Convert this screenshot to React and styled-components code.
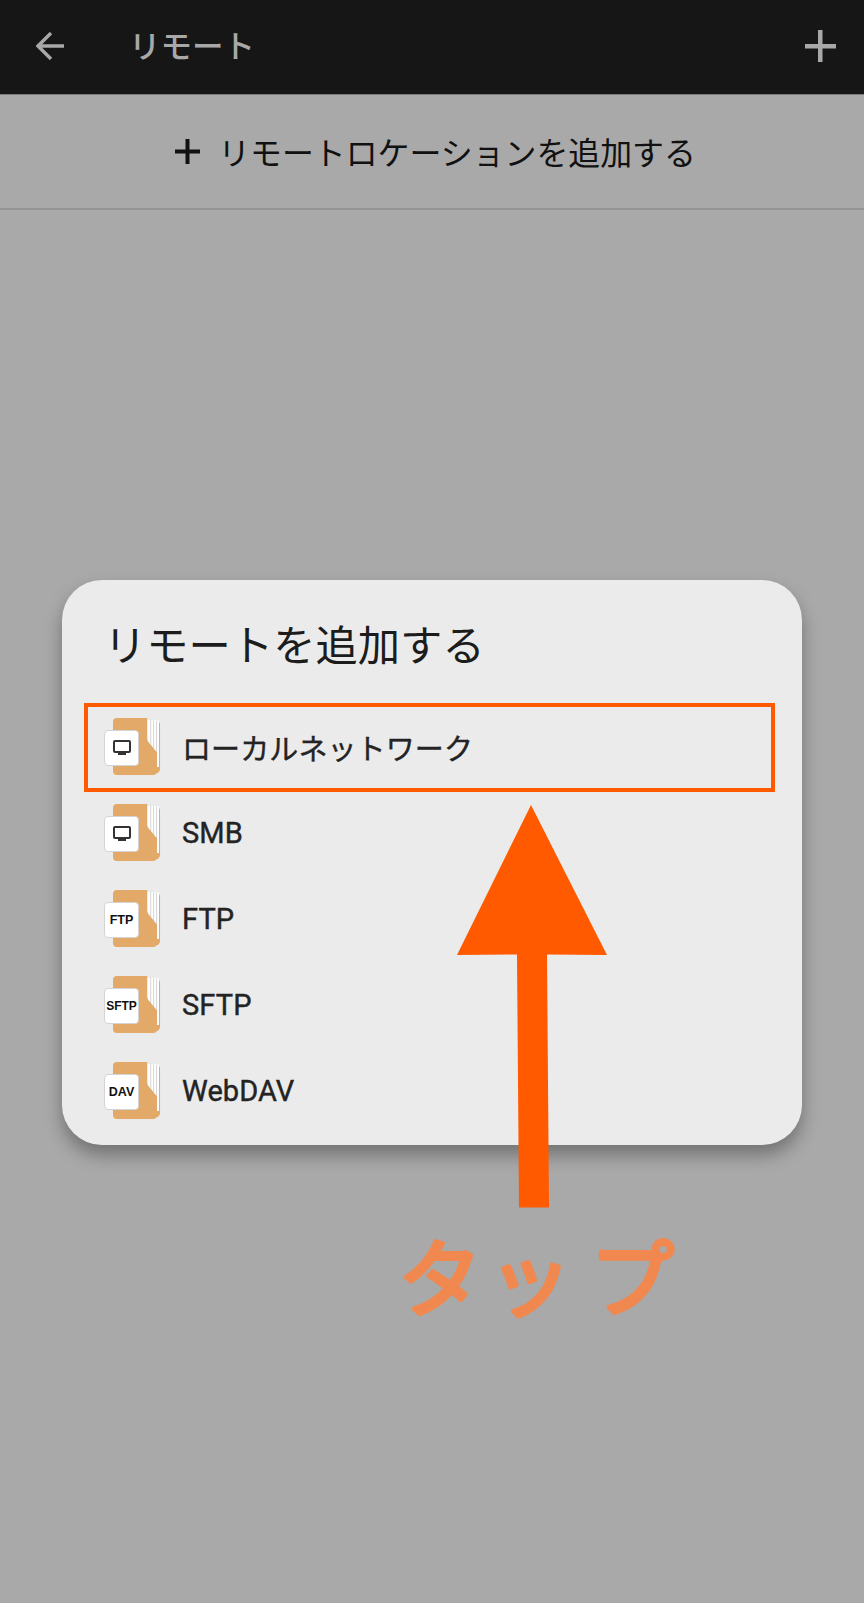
import React from "react";
import styled, { createGlobalStyle } from "styled-components";

const Global = createGlobalStyle`
  html, body { margin: 0; padding: 0; background: #a9a9a9; }
  * { box-sizing: border-box; }
`;

const JP = `"Roboto", "Noto Sans CJK JP", sans-serif`;

const Page = styled.div`
  position: relative;
  width: 864px;
  height: 1603px;
  overflow: hidden;
  background: #a9a9a9;
  font-family: ${JP};
`;
const Header = styled.header`
  height: 95px;
  background: #161616;
  border-bottom: 1px solid #7d7d7d;
  display: flex;
  align-items: center;
  color: #a8a8a8;
  padding: 0 28px 2px 36px;
`;
const BackIcon = styled.svg`
  width: 28px;
  height: 28px;
  flex: none;
`;
const Title = styled.h1`
  margin: 3px 0 0 65px;
  flex: 1;
  font-size: 31.5px;
  font-weight: 500;
  line-height: 40px;
`;
const AddBar = styled.div`
  height: 115px;
  border-bottom: 2px solid #939393;
  display: flex;
  align-items: center;
  justify-content: center;
  gap: 18px;
  color: #111;
  font-size: 31.9px;
  padding: 0 0 1px 7px;
`;
const Dialog = styled.section`
  width: 740px;
  height: 565px;
  margin: 370px 0 0 62px;
  background: #ebebeb;
  border-radius: 40px;
  box-shadow: 0 10px 18px rgba(0, 0, 0, 0.32);
  padding-top: 37px;
`;
const DialogTitle = styled.h2`
  margin: 0 0 0 42px;
  font-size: 42.3px;
  line-height: 60px;
  font-weight: 400;
  color: #1c1c1c;
`;
const List = styled.ul`
  list-style: none;
  margin: 26px 0 0;
  padding: 0;
`;
const Row = styled.li`
  position: relative;
  height: 86px;
  display: flex;
  align-items: center;
  padding-left: 42px;
  gap: 21px;
  font-size: 29px;
  color: #232323;
`;
const Label = styled.span`
  padding-top: 2px;
  -webkit-text-stroke: 0.4px #232323;
  letter-spacing: 0.1px;
`;
const Highlight = styled.div`
  position: absolute;
  left: 22px;
  top: 0;
  width: 691px;
  height: 89px;
  border: 4.4px solid #ff5a00;
`;
const Icon = styled.div`
  position: relative;
  width: 57px;
  height: 58px;
  flex: none;
`;
const Folder = styled.svg`
  position: absolute;
  left: 9px;
  top: 1px;
  width: 48px;
  height: 57px;
`;
const Badge = styled.div`
  position: absolute;
  left: 0;
  top: 13px;
  width: 35px;
  height: 36px;
  background: #fff;
  border: 1px solid #d4d4d4;
  border-radius: 4px;
  display: flex;
  align-items: center;
  justify-content: center;
  font-family: "Liberation Sans", sans-serif;
  font-weight: 700;
  font-size: ${(p) => (p.$small ? "12px" : "12.5px")};
  color: #111;
`;
const Annotation = styled.svg`
  position: absolute;
  left: 0;
  top: 0;
  width: 864px;
  height: 1603px;
  pointer-events: none;
`;
const TapText = styled.text`
  font-family: "Noto Sans CJK JP", sans-serif;
  font-size: 84px;
  fill: #f0884f;
  stroke: #f0884f;
  stroke-width: 4px;
  stroke-linejoin: round;
  stroke-linecap: round;
`;

const FolderArt = () => (
  <Folder viewBox="0 0 49 58">
    <path d="M38 4h8a2 2 0 0 1 2 2v47l-2 3h-8z" fill="#e2a968" />
    <path d="M34 2h11a2 2 0 0 1 2 2v46H34z" fill="#fff" />
    <path d="M38.5 1.5V28M41.5 2v30M44.5 2.5V36" stroke="#c9c9c9" strokeWidth="0.8" fill="none" />
    <path
      d="M4 0h31v21q0 2 1.5 4L45 35v19a4 4 0 0 1-4 4H4a4 4 0 0 1-4-4V4a4 4 0 0 1 4-4z"
      fill="#e2a968"
    />
  </Folder>
);

const Monitor = () => (
  <svg width="18" height="16" viewBox="0 0 18 16">
    <rect x="1" y="1" width="16" height="11" rx="1" fill="none" stroke="#333" strokeWidth="2" />
    <rect x="5" y="13" width="8" height="2" fill="#333" />
  </svg>
);

const rows = [
  { label: "ローカルネットワーク", badge: <Monitor />, active: true },
  { label: "SMB", badge: <Monitor /> },
  { label: "FTP", badge: "FTP" },
  { label: "SFTP", badge: "SFTP", small: true },
  { label: "WebDAV", badge: "DAV" },
];

export default function App() {
  return (
    <Page>
      <Global />
      <Header>
        <BackIcon viewBox="0 0 28 28" fill="none" stroke="#a8a8a8" strokeWidth="3.4">
          <path d="M28 14H3M15 1 2 14l13 13" />
        </BackIcon>
        <Title>リモート</Title>
        <svg width="32" height="32" viewBox="0 0 32 32" fill="#a8a8a8">
          <rect x="14" width="4.5" height="32" />
          <rect x="1" y="14" width="31" height="4.5" />
        </svg>
      </Header>
      <AddBar>
        <svg width="25" height="25" viewBox="0 0 25 25" fill="#111">
          <rect x="10.5" width="4" height="25" />
          <rect y="10.5" width="25" height="4" />
        </svg>
        <span>リモートロケーションを追加する</span>
      </AddBar>
      <Dialog>
        <DialogTitle>リモートを追加する</DialogTitle>
        <List>
          {rows.map((r) => (
            <Row key={r.label}>
              <Icon>
                <FolderArt />
                <Badge $small={r.small}>{r.badge}</Badge>
              </Icon>
              <Label>{r.label}</Label>
              {r.active && <Highlight />}
            </Row>
          ))}
        </List>
      </Dialog>
      <Annotation viewBox="0 0 864 1603">
        <path d="M531 805 457 955l60-.5 2 253h30l-2-253 60 .5z" fill="#ff5a00" />
        <TapText x="398 488 590" y="1310">タップ</TapText>
      </Annotation>
    </Page>
  );
}
